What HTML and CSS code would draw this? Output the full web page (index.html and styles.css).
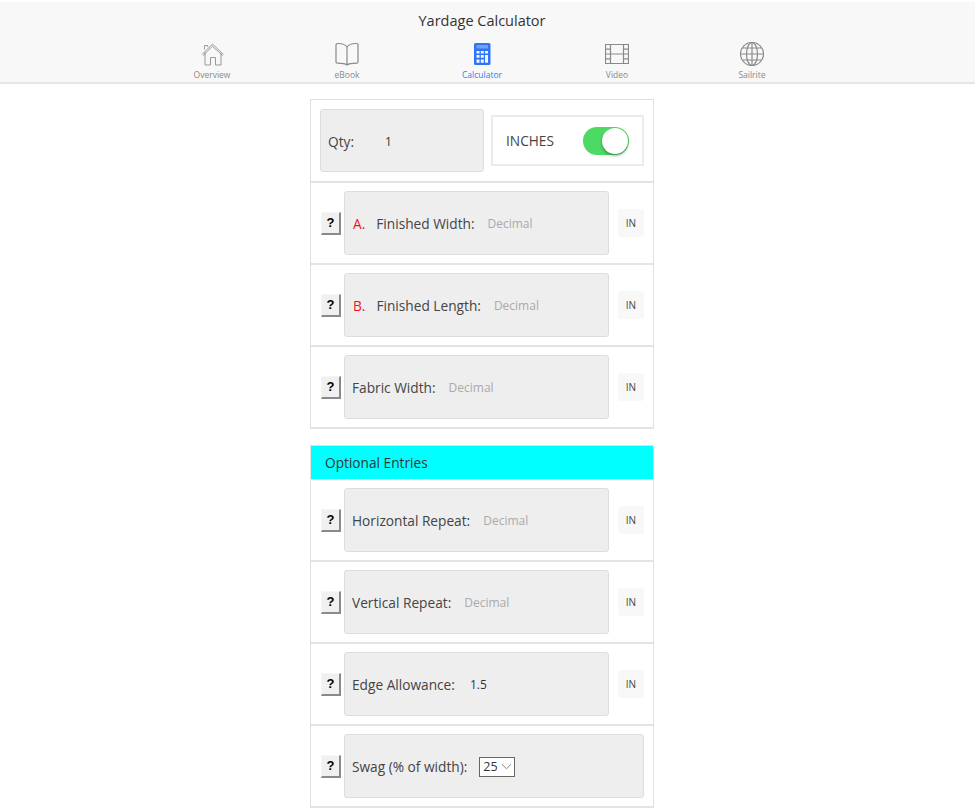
FILE: index.html
```html
<!DOCTYPE html>
<html lang="en">
<head>
	<meta charset="UTF-8">
	<title>Yardage Calculator</title>
	<link rel="stylesheet" href="styles.css">
</head>
<body>
	<div class="header">
		<div class="title">Yardage Calculator</div>
		<div class="tabs">
			<a class="tab">
				<svg class="thin" width="24" height="24" viewBox="0 0 24 24"><path d="M2 12.500 12.500 2 23.500 12.500M2.800 13.800 12.500 4.200 22.700 13.800M5 10V23h5.500v-7.500h5V23H21V11M4.500 7.500V3.500h3.200V5"/></svg>
				<span>Overview</span>
			</a>
			<a class="tab">
				<svg width="24" height="24" viewBox="0 0 24 24"><path d="M12 5C10.500 2.500 7 1.500 3 1.500 1.500 1.500 1 2 1 3.500V20c0 .8.500 1.200 1.500 1.200 4 0 7.500.3 9.500 1.800 2-1.500 5.500-1.800 9.500-1.800 1 0 1.500-.4 1.500-1.200V3.500c0-1.500-.5-2-2-2C17 1.500 13.500 2.500 12 5zM12 5V23"/></svg>
				<span>eBook</span>
			</a>
			<a class="tab active">
				<svg width="24" height="24" viewBox="0 0 24 24"><rect class="solid" x="4" y="1" width="16.500" height="22" rx="1.500"/><rect class="screen" x="6.500" y="3" width="11.500" height="3.500"/><path class="cut" d="M6.500 9h3v2.500h-3zM10.800 9h3v2.500h-3zM15 9h3v2.500h-3zM6.500 13h3v2.800h-3zM10.800 13h3v2.800h-3zM15 13h3v7.800h-3zM6.500 17.500h3v3.300h-3zM10.800 17.500h3v3.300h-3z"/></svg>
				<span>Calculator</span>
			</a>
			<a class="tab">
				<svg width="24" height="24" viewBox="0 0 24 24"><path d="M.5 2.500h23v19H.5zM5.500 2.500v19M18.500 2.500v19M5.500 12h13M.5 7.200h5M.5 12h5M.5 16.800h5M18.500 7.200h5M18.500 12h5M18.500 16.800h5"/></svg>
				<span>Video</span>
			</a>
			<a class="tab">
				<svg width="24" height="24" viewBox="0 0 24 24"><circle cx="12" cy="12" r="11.500"/><ellipse cx="12" cy="12" rx="5.500" ry="11.500"/><path d="M12 .5v23M.5 12h23M2.200 6h19.600M2.200 18h19.600"/></svg>
				<span>Sailrite</span>
			</a>
		</div>
	</div>

	<div class="content">
		<div class="list">
			<div class="row qty-row">
				<div class="field qty"><label>Qty:</label><span class="val">1</span></div>
				<div class="units">
					<span>INCHES</span>
					<div class="toggle"><div class="knob"></div></div>
				</div>
			</div>
			<div class="row">
				<button class="help">?</button>
				<div class="field"><b class="letter">A.</b><label>Finished Width:</label><span class="hint">Decimal</span></div>
				<div class="unit">IN</div>
			</div>
			<div class="row">
				<button class="help">?</button>
				<div class="field"><b class="letter">B.</b><label>Finished Length:</label><span class="hint">Decimal</span></div>
				<div class="unit">IN</div>
			</div>
			<div class="row">
				<button class="help">?</button>
				<div class="field"><label>Fabric Width:</label><span class="hint">Decimal</span></div>
				<div class="unit">IN</div>
			</div>
		</div>

		<div class="list second">
			<div class="divider">Optional Entries</div>
			<div class="row">
				<button class="help">?</button>
				<div class="field"><label>Horizontal Repeat:</label><span class="hint">Decimal</span></div>
				<div class="unit">IN</div>
			</div>
			<div class="row">
				<button class="help">?</button>
				<div class="field"><label>Vertical Repeat:</label><span class="hint">Decimal</span></div>
				<div class="unit">IN</div>
			</div>
			<div class="row">
				<button class="help">?</button>
				<div class="field"><label>Edge Allowance:</label><span class="val">1.5</span></div>
				<div class="unit">IN</div>
			</div>
			<div class="row">
				<button class="help">?</button>
				<div class="field"><label>Swag (% of width):</label>
					<div class="select">25
						<svg width="11" height="7" viewBox="0 0 12 7"><path d="M1 1l5 5 5-5"/></svg>
					</div>
				</div>
			</div>
		</div>
	</div>
</body>
</html>
```

FILE: styles.css
```css
*{
	margin:0;
	padding:0;
	box-sizing:border-box;
}
body{
	font-family:"Open Sans","Noto Sans",sans-serif;
	color:#444;
	background:#fff;
	padding-right:12px;
}
.header{
	height:82px;
	margin:2px -11px 0 0;
	padding-right:11px;
	background:#f8f8f8;
	border-bottom:2px solid #e6e6e6;
}
.title{
	height:40px;
	padding-top:8px;
	text-align:center;
	font-size:14.5px;
	line-height:22px;
	color:#333;
}
.tabs{
	display:flex;
	justify-content:center;
}
.tab{
	width:135px;
	display:flex;
	flex-direction:column;
	align-items:center;
	font-size:8.5px;
	line-height:12px;
	color:#8a8a8a;
}
.tab svg{
	fill:none;
	stroke:#8a8a8a;
	stroke-width:1.2;
	margin-bottom:3px;
}
.tab svg.thin{
	stroke:#999;
	stroke-width:1;
}
.tab.active{
	color:#3478f6;
}
.tab.active svg{
	stroke:none;
}
.tab .solid{
	fill:#2f74f5;
}
.tab .screen{
	fill:#6ea0f8;
}
.tab .cut{
	fill:#f0f5fe;
}
.content{
	width:344px;
	margin:15px auto 0;
}
.list{
	border:1px solid #e0e0e0;
	border-bottom:0;
}
.second{
	margin-top:16px;
}
.row{
	height:82px;
	display:flex;
	align-items:center;
	padding:0 9px 0 10px;
	border-bottom:2px solid #e4e4e4;
}
.qty-row{
	height:83px;
	padding-left:9px;
}
.help{
	flex:none;
	width:20px;
	height:23px;
	margin-right:3px;
	font-family:"Liberation Sans",sans-serif;
	font-size:13px;
	font-weight:bold;
	color:#000;
	background:#f0f0f0;
	border:solid;
	border-width:1px 2px 2px 1px;
	border-color:#f6f6f6 #8a8a8a #8a8a8a #f6f6f6;
}
.field{
	flex:1;
	height:63.5px;
	display:flex;
	align-items:center;
	padding:1px 7px 0;
	font-size:13.7px;
	background:#eee;
	border:1px solid #ddd;
	border-radius:3px;
}
.letter{
	font-weight:normal;
	color:#f5101f;
	margin:0 11px 0 1px;
}
.hint{
	font-size:12px;
	color:#aaa;
	margin-left:13px;
}
.val{
	font-size:12px;
	color:#333;
	margin-left:15px;
}
.unit{
	flex:none;
	width:26px;
	height:28px;
	margin-left:9px;
	font-size:10px;
	line-height:28px;
	text-align:center;
	background:#f8f8f8;
	border-radius:3px;
}
.qty{
	flex:none;
	width:164px;
}
.qty .val{
	margin-left:31px;
}
.units{
	flex:1;
	height:51px;
	margin-left:7px;
	display:flex;
	align-items:center;
	justify-content:space-between;
	padding:0 13px;
	font-size:13.7px;
	border:2px solid #ebebeb;
}
.toggle{
	width:46px;
	height:28px;
	background:#4cd964;
	border-radius:14px;
	position:relative;
}
.knob{
	position:absolute;
	top:1px;
	right:1px;
	width:26px;
	height:26px;
	background:#fff;
	border-radius:50%;
	box-shadow:0 2px 3px rgba(0,0,0,.3);
}
.divider{
	height:34px;
	padding-left:14px;
	font-size:13.7px;
	line-height:33px;
	color:#333;
	background:#0ff;
	border-bottom:1px solid #e2e2e2;
}
.select{
	width:36px;
	height:20px;
	margin-left:12px;
	padding:0 2px 0 3px;
	display:flex;
	align-items:center;
	justify-content:space-between;
	font-size:12.5px;
	color:#333;
	background:#fff;
	border:1px solid #666;
}
.select svg{
	fill:none;
	stroke:#777;
}
```
